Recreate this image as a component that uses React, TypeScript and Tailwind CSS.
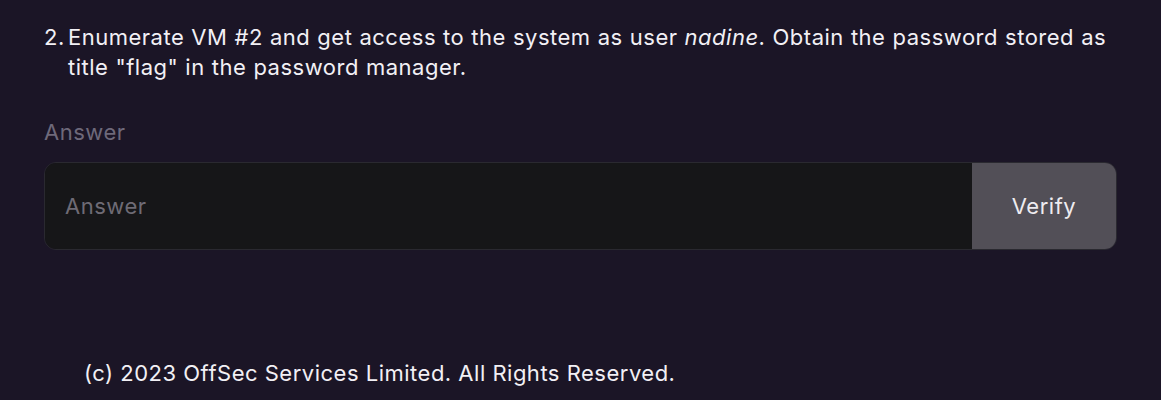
export default function App() {
  return (
    <div className="min-h-[400px] w-full bg-[#1b1526] text-[#f2f0f5]" style={{ fontFamily: "Inter, 'Noto Sans', sans-serif" }}>
      <div className="px-[44px] pt-[22px] tracking-[0.5px]">
        <div className="flex text-[22px] leading-[30px]">
          <span className="w-[24px] shrink-0">2.</span>
          <p className="[word-spacing:0.4px]">
            Enumerate VM #2 and get access to the system as user <em>nadine</em>. Obtain the password stored as title "flag" in the password manager.
          </p>
        </div>
        <div className="mt-[35px] text-[22px] leading-[30px] text-[#6e697a]">Answer</div>
        <div className="mt-[15px] flex h-[88px] w-[1073px] overflow-hidden rounded-[12px] border border-[#2a2930]">
          <input
            placeholder="Answer"
            className="flex-1 bg-[#161618] px-[20px] text-[22px] tracking-[0.5px] text-white outline-none placeholder:text-[#6e6b75]"
          />
          <button className="w-[144px] bg-[#524f57] text-[22px] tracking-[0.5px] text-[#eeecf0]">Verify</button>
        </div>
        <div className="mt-[108px] pl-[40px] text-[22px] leading-[30px] text-[#f2f0f5]">
          (c) 2023 OffSec Services Limited. All Rights Reserved.
        </div>
      </div>
    </div>
  );
}
